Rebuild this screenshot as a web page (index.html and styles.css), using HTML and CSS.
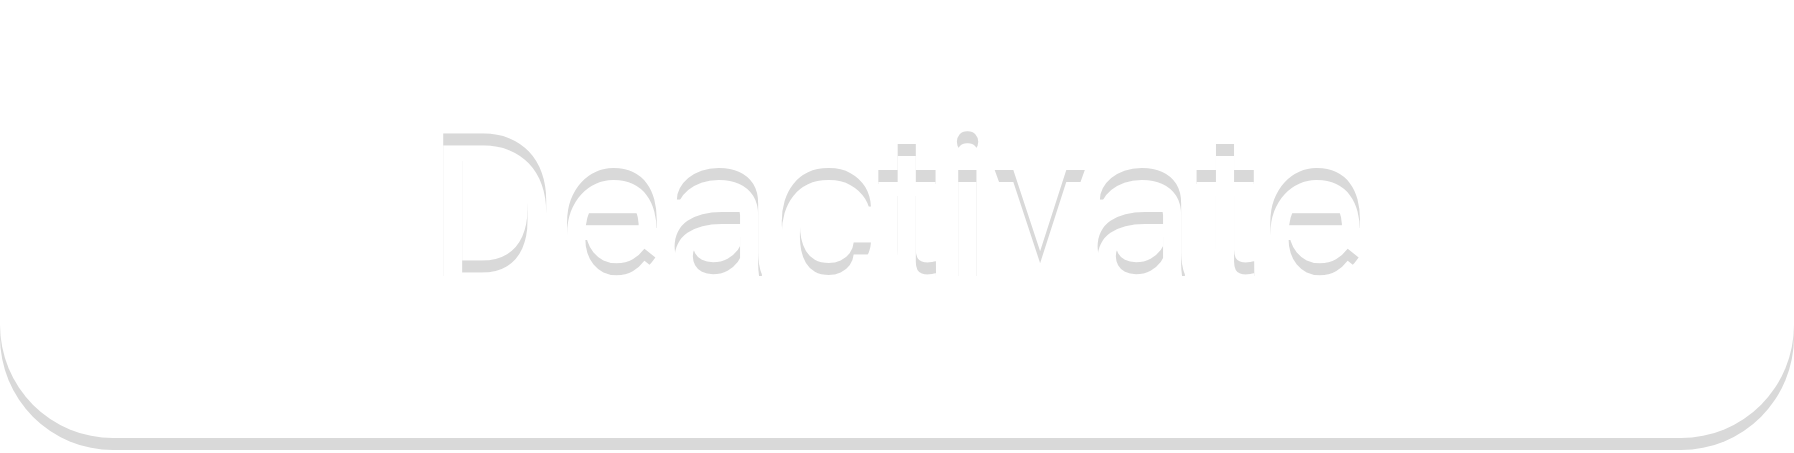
FILE: index.html
```html
<!DOCTYPE html>
<html lang="en">
<head>
    <meta charset="UTF-8">
    <meta name="viewport" content="width=device-width, initial-scale=1.0">
    <title>Deactivate</title>
    <link rel="stylesheet" href="styles.css">
</head>
<body>
    <div class="deactivate-btn" role="button" tabindex="0">
        <span class="deactivate-label">Deactivate</span>
    </div>
</body>
</html>
```

FILE: styles.css
```css
html, body {
    margin: 0;
    padding: 0;
    background-color: #fff;
}

body {
    font-family: 'Roboto', sans-serif;
    padding-bottom: 15px;
}

.deactivate-btn {
    display: flex;
    align-items: center;
    justify-content: center;
    box-sizing: border-box;
    width: 100%;
    height: 438px;
    border-radius: 113px;
    background-color: #fff;
    box-shadow: 0 12px 0 #d9d9d9;
    cursor: pointer;
}

.deactivate-label {
    color: #fff;
    font-size: 200px;
    font-weight: 400;
    line-height: normal;
    text-shadow: 0 -12px 0 #d9d9d9;
}
```
